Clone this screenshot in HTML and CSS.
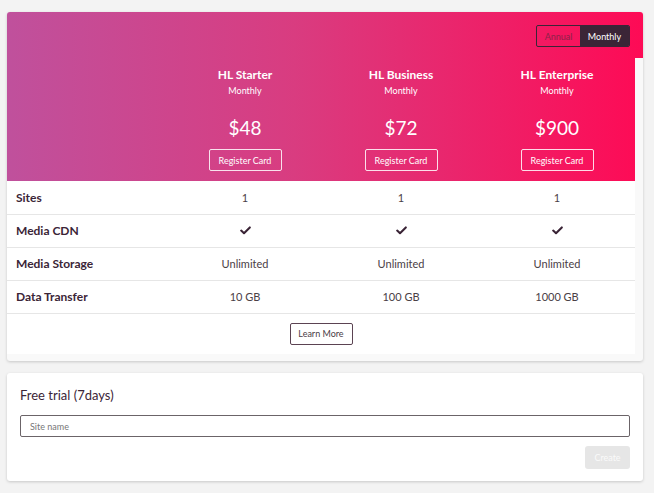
FILE: index.html
```html
<!DOCTYPE html>
<html lang="en">
<head>
  <meta charset="UTF-8" />
  <meta name="viewport" content="width=device-width, initial-scale=1.0"/>
  <title>Pricing</title>
  <link rel="stylesheet" href="styles.css">
</head>
<body>

  <div class="pricing-card">
    <div class="period-bar">
      <div class="period-toggle">
        <button class="period-btn">Annual</button>
        <button class="period-btn active">Monthly</button>
      </div>
    </div>

    <div class="table-wrap">
      <table class="pricing-table">
        <colgroup>
          <col class="col-label">
          <col>
          <col>
          <col>
        </colgroup>
        <thead>
          <tr>
            <th></th>
            <th class="plan">
              <div class="plan-name">HL Starter</div>
              <div class="plan-period">Monthly</div>
              <div class="plan-price">$48</div>
              <button class="btn-register">Register Card</button>
            </th>
            <th class="plan">
              <div class="plan-name">HL Business</div>
              <div class="plan-period">Monthly</div>
              <div class="plan-price">$72</div>
              <button class="btn-register">Register Card</button>
            </th>
            <th class="plan">
              <div class="plan-name">HL Enterprise</div>
              <div class="plan-period">Monthly</div>
              <div class="plan-price">$900</div>
              <button class="btn-register">Register Card</button>
            </th>
          </tr>
        </thead>
        <tbody>
          <tr>
            <td class="feature">Sites</td>
            <td>1</td>
            <td>1</td>
            <td>1</td>
          </tr>
          <tr>
            <td class="feature">Media CDN</td>
            <td><svg class="check" width="11" height="9" viewBox="0 0 11 9"><path d="M1.2 4.6 L4 7.2 L9.8 1.4" fill="none" stroke="#3b2537" stroke-width="2.1" stroke-linecap="round" stroke-linejoin="round"/></svg></td>
            <td><svg class="check" width="11" height="9" viewBox="0 0 11 9"><path d="M1.2 4.6 L4 7.2 L9.8 1.4" fill="none" stroke="#3b2537" stroke-width="2.1" stroke-linecap="round" stroke-linejoin="round"/></svg></td>
            <td><svg class="check" width="11" height="9" viewBox="0 0 11 9"><path d="M1.2 4.6 L4 7.2 L9.8 1.4" fill="none" stroke="#3b2537" stroke-width="2.1" stroke-linecap="round" stroke-linejoin="round"/></svg></td>
          </tr>
          <tr>
            <td class="feature">Media Storage</td>
            <td>Unlimited</td>
            <td>Unlimited</td>
            <td>Unlimited</td>
          </tr>
          <tr>
            <td class="feature">Data Transfer</td>
            <td>10 GB</td>
            <td>100 GB</td>
            <td>1000 GB</td>
          </tr>
          <tr class="more-row">
            <td colspan="4"><button class="btn-more">Learn More</button></td>
          </tr>
        </tbody>
      </table>
    </div>
  </div>

  <div class="trial-card">
    <h3>Free trial (7days)</h3>
    <input type="text" class="site-input" placeholder="Site name" />
    <div class="trial-actions">
      <button class="btn-create" disabled>Create</button>
    </div>
  </div>

</body>
</html>
```

FILE: styles.css
```css
:root {
  --pink-start: #bf519d;
  --pink-end: #ff0954;
  --dark: #3b2537;
  --text: #4a4046;
  --line: #e6e6e6;
  --page: #f3f3f3;
}

* {
  box-sizing: border-box;
}

body {
  margin: 0;
  padding: 12px 11px 12px 7px;
  background-color: var(--page);
  font-family: Lato, 'Open Sans', sans-serif;
  color: var(--text);
}

button {
  font-family: inherit;
  cursor: pointer;
}

.pricing-card,
.trial-card {
  border-radius: 3px;
  box-shadow: 0 1px 3px rgba(0,0,0,0.18);
}

.pricing-card {
  background-color: #f9f9f9;
  padding-bottom: 7px;
  overflow: hidden;
}

.period-bar,
.pricing-table thead th {
  background: linear-gradient(to right, var(--pink-start), #d93c80 45%, var(--pink-end)) fixed;
}

.period-bar {
  display: flex;
  justify-content: flex-end;
  padding: 13px 13px 11px;
}

.period-toggle {
  display: flex;
  border: 1px solid var(--dark);
  border-radius: 2px;
  overflow: hidden;
}

.period-btn {
  width: 43px;
  height: 20px;
  padding: 0;
  border: none;
  background: transparent;
  color: #8c2249;
  font-size: 9px;
}

.period-btn.active {
  width: 49px;
  background-color: var(--dark);
  color: #fff;
}

.table-wrap {
  margin-right: 8px;
  background-color: #fff;
}

.pricing-table {
  width: 100%;
  border-collapse: collapse;
  table-layout: fixed;
}

.col-label {
  width: 160px;
}

.plan {
  padding: 10px 0;
  color: #fff;
  text-align: center;
  font-weight: normal;
}

.plan-name {
  font-size: 12px;
  font-weight: bold;
  line-height: 14px;
}

.plan-period {
  margin-top: 2px;
  font-size: 9px;
  line-height: 14px;
}

.plan-price {
  margin-top: 18px;
  font-size: 19px;
  line-height: 24px;
}

.btn-register {
  margin-top: 9px;
  width: 73px;
  height: 22px;
  padding: 0;
  background: transparent;
  border: 1px solid rgba(255,255,255,0.85);
  border-radius: 2px;
  color: #fff;
  font-size: 9px;
}

.pricing-table td {
  height: 33px;
  border-bottom: 1px solid var(--line);
  text-align: center;
  font-size: 11px;
  padding: 0;
}

.pricing-table td.feature {
  text-align: left;
  padding-left: 9px;
  font-size: 12px;
  font-weight: bold;
  color: var(--dark);
}

.check {
  display: block;
  margin: 0 auto;
}

.more-row td {
  height: 41px;
  border-bottom: none;
}

.btn-more {
  width: 63px;
  height: 22px;
  padding: 0;
  background: #fff;
  border: 1px solid #5b4352;
  border-radius: 2px;
  color: var(--text);
  font-size: 9px;
}

.trial-card {
  margin-top: 12px;
  background-color: #fff;
  padding: 13px 13px 12px;
}

.trial-card h3 {
  margin: 0;
  font-size: 13px;
  line-height: 18px;
  font-weight: normal;
  color: var(--dark);
}

.site-input {
  display: block;
  width: 100%;
  height: 22px;
  margin-top: 11px;
  padding: 0 9px;
  border: 1px solid #6b6468;
  border-radius: 2px;
  font-family: inherit;
  font-size: 9px;
  color: var(--text);
}

.site-input::placeholder {
  color: #777;
}

.trial-actions {
  display: flex;
  justify-content: flex-end;
  margin-top: 9px;
}

.btn-create {
  height: 23px;
  width: 45px;
  border: none;
  border-radius: 3px;
  background-color: #e6e6e6;
  color: #fafafa;
  font-size: 9px;
  cursor: default;
}
```
